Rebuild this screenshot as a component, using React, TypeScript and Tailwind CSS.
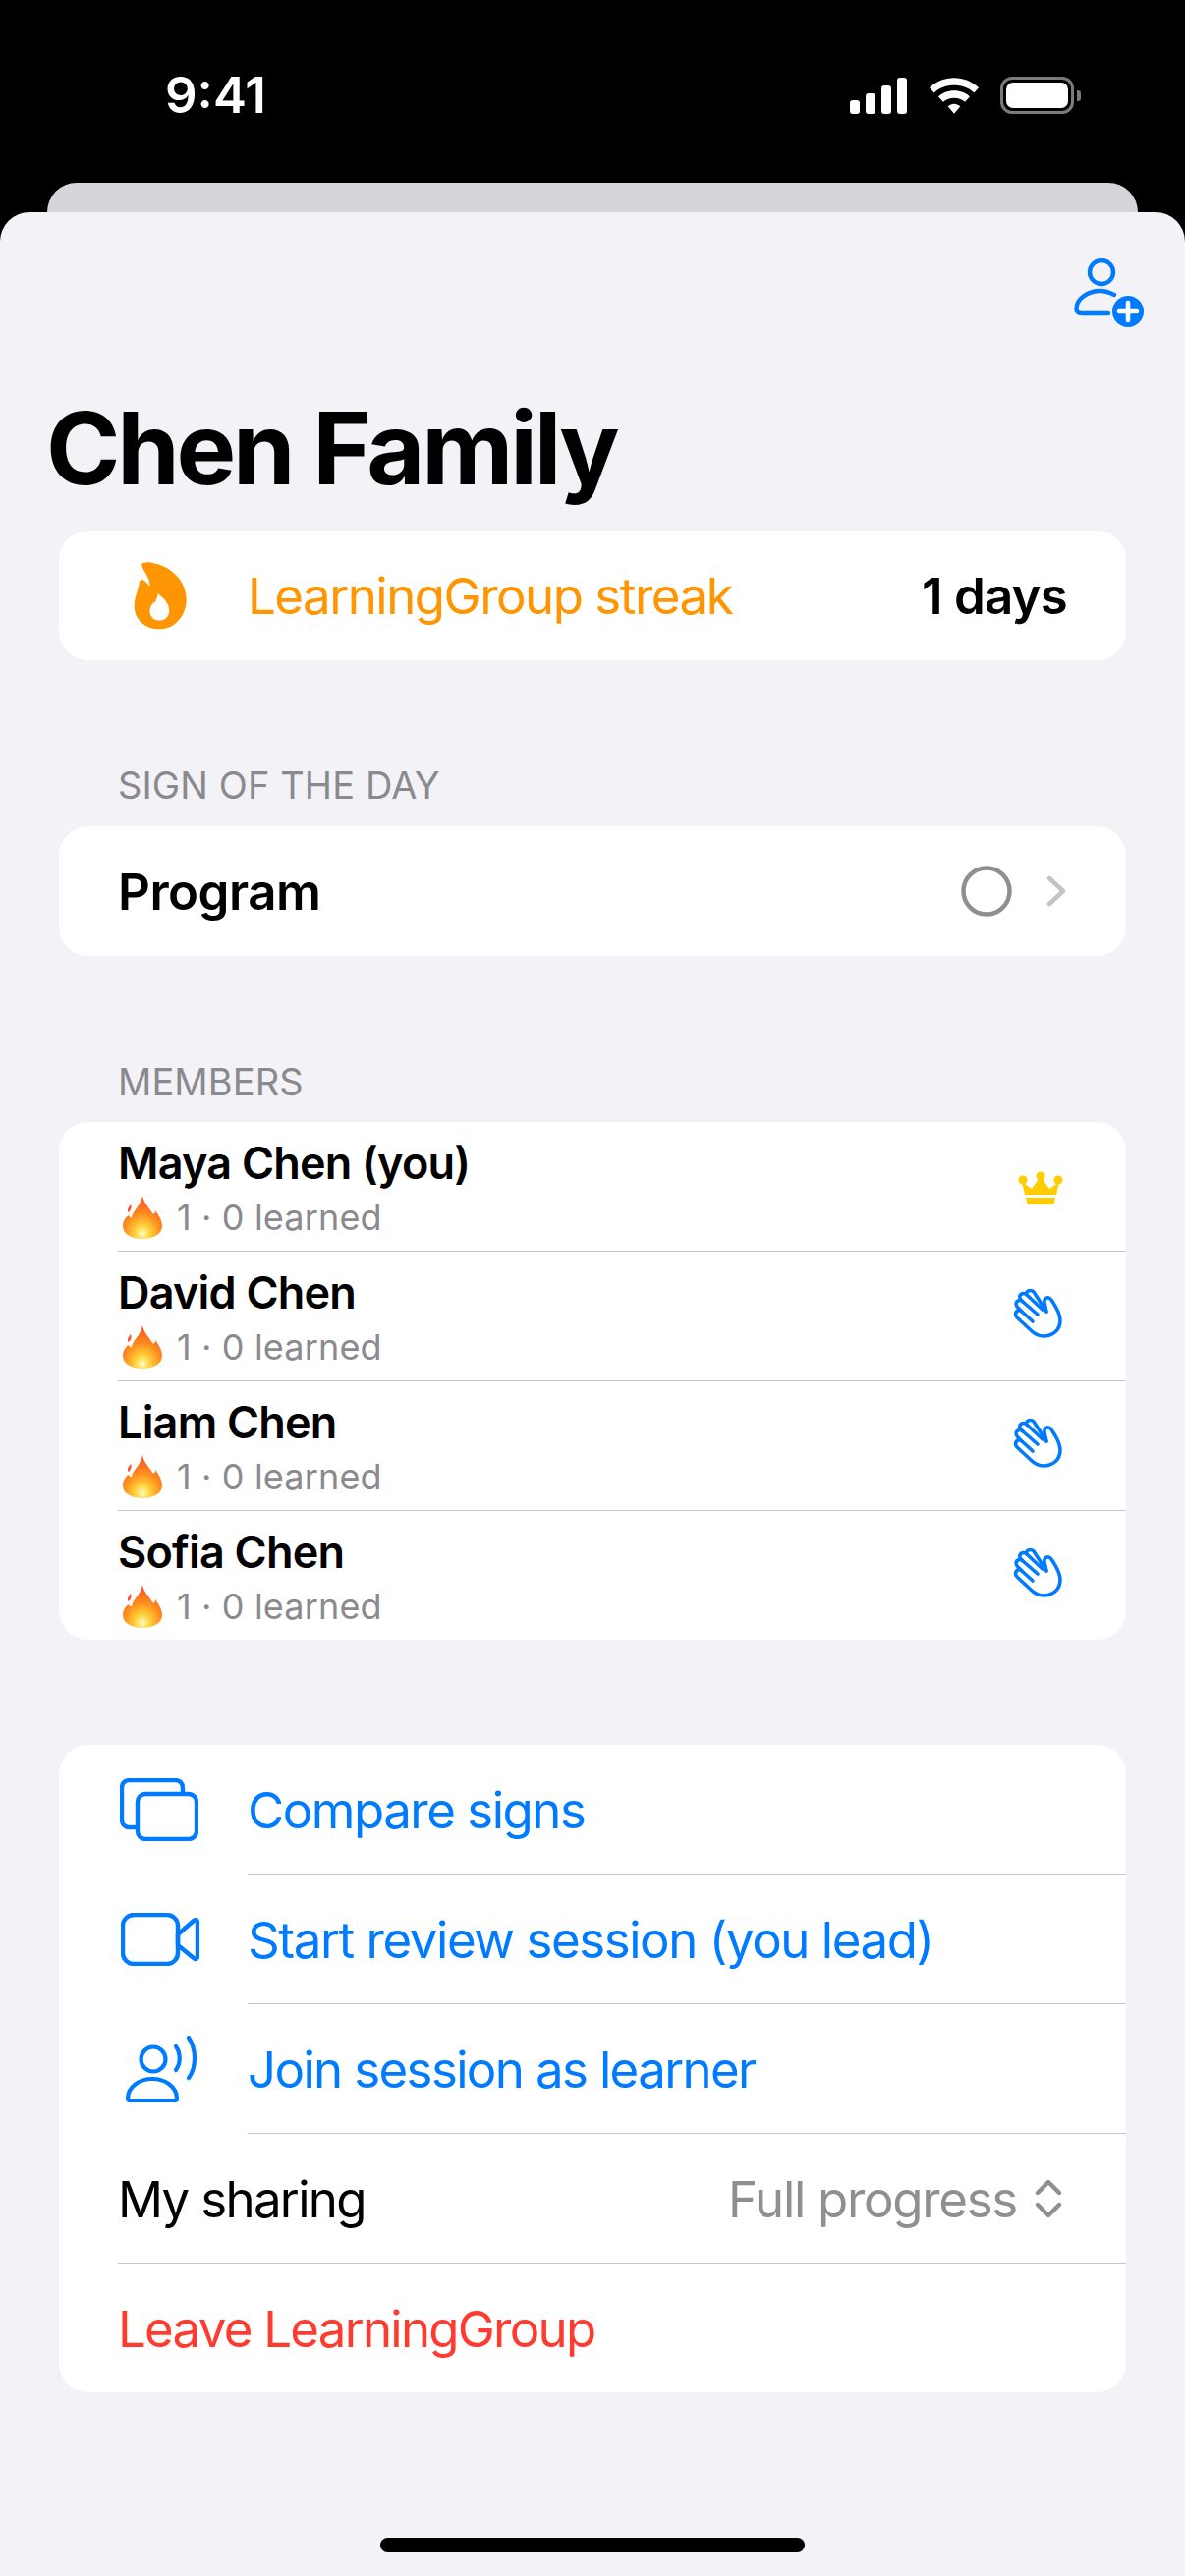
const font = "font-['Inter','Liberation_Sans',sans-serif]";

function Flame() {
  return (
    <svg viewBox="100 90 170 215" className="w-[57px] h-[72px]">
      <path fillRule="evenodd" fill="#ff9500" d="M130 104C132 97 145 96 160 98C215 106 266 150 266 210C266 262 228 300 185 300C140 300 108 270 108 230C108 200 120 185 123 158C124 148 133 148 140 154C146 160 150 165 155 170C158 145 135 125 130 104ZM180 192C177 205 172 222 166 220C160 225 155 235 155 245C155 262 168 274 184 274C202 274 214 262 214 243C214 220 196 205 180 192Z" />
    </svg>
  );
}

function Emoji() {
  return (
    <svg viewBox="0 0 40 44" className="w-[40px] h-[44px]">
      <defs>
        <radialGradient id="fl" cx="0.5" cy="0.88" r="0.95">
          <stop offset="0" stopColor="#fffbc0" />
          <stop offset="0.2" stopColor="#ffd23a" />
          <stop offset="0.5" stopColor="#ff8a1e" />
          <stop offset="1" stopColor="#f2402a" />
        </radialGradient>
      </defs>
      <path fill="#f8553a" d="M8 9C9 11 9 14 6 17C4 16 5 12 8 9Z" />
      <path fill="url(#fl)" d="M20 0C21 7 26 11 29 16C30 18 31 19 32 18C33 18 33 16 33 15C37 20 40 26 40 31C40 39 31 44 20 44C9 44 0 39 0 31C0 25 4 21 6 20C7 21 7 23 9 22C10 15 18 11 20 0Z" />
    </svg>
  );
}

function Wave() {
  return (
    <svg viewBox="0 0 70 70" className="w-[70px] h-[70px] shrink-0" fill="none" stroke="#007aff" strokeWidth="3.6" strokeLinecap="round" strokeLinejoin="round">
      <path d="M45 30L43 21C42 16 47 14 50 18C54 24 59 31 59 39C59 50 50 55 42 55C37 55 33 53 29 49L15 36C11 32 16 26 20 30L31 40" />
      <path d="M20 30L16 26C11 21 17 16 21 20L36 33" />
      <path d="M21 20L19 18C15 14 21 9 25 13L41 28" />
      <path d="M25 13C23 9 29 7 32 10L45 30" />
    </svg>
  );
}

function Crown() {
  return (
    <svg viewBox="0 0 46 34" className="w-[46px] h-[34px] ml-[16px] mt-[2px]" fill="#ffcc00">
      <circle cx="5" cy="9" r="4.5" />
      <circle cx="23" cy="5" r="4.5" />
      <circle cx="41" cy="9" r="4.5" />
      <path d="M4 11L14 18L23 5L32 18L42 11L39 24H7Z" />
      <path d="M8 27H38L37 32C36.7 33.4 35.5 34 34 34H12C10.5 34 9.3 33.4 9 32Z" />
    </svg>
  );
}

function Member({ name, crown }: { name: string; crown?: boolean }) {
  return (
    <div className="h-[131px] flex items-center pl-[60px] pr-[56px]">
      <div className="flex-1 h-full flex flex-col pt-[13px]">
        <div className="text-[45px] leading-[58px] font-semibold text-black tracking-[-0.8px]">{name}</div>
        <div className="flex items-center h-[48px] mt-[2px] pl-[5px]">
          <Emoji />
          <span className="ml-[15px] text-[36px] text-[#8a8a8e] tracking-[0.15px]">1 · 0 learned</span>
        </div>
      </div>
      <div className="w-[70px] flex">{crown ? <Crown /> : <Wave />}</div>
    </div>
  );
}

function Divider({ inset }: { inset: string }) {
  return <div className={`h-px bg-[#c6c6c8] ${inset}`} />;
}

function ActionRow({ icon, label, tracking }: { icon: React.ReactNode; label: string; tracking: string }) {
  return (
    <div className="h-[131px] flex items-center">
      <div className="w-[192px] flex justify-center pl-[14px]">{icon}</div>
      <span className={`text-[51px] text-[#007aff] pt-[3px] ${tracking}`}>{label}</span>
    </div>
  );
}

function Label({ children }: { children: React.ReactNode }) {
  return <div className="pl-[120px] text-[38px] leading-[46px] text-[#8a8a8e] tracking-[0.1px]">{children}</div>;
}

export default function App() {
  return (
    <div className={`${font} w-[1206px] h-[2622px] bg-black flex flex-col overflow-hidden`}>
      <div className="h-[186px] flex justify-between text-white">
        <span className="ml-[168px] mt-[66px] text-[51px] leading-[62px] font-semibold">9:41</span>
        <div className="mr-[106px] mt-[78px] flex items-start h-[40px]">
          <svg viewBox="0 0 58 38" className="w-[58px] h-[38px] mt-[1px]" fill="#fff">
            <rect x="0" y="23" width="10" height="14" rx="3" />
            <rect x="16" y="16" width="10" height="21" rx="3" />
            <rect x="32" y="8" width="10" height="29" rx="3" />
            <rect x="48" y="0" width="10" height="37" rx="3" />
          </svg>
          <svg viewBox="0 0 150 110" className="w-[50px] h-[37px] ml-[23px] mt-[1px]" fill="#fff">
            <path d="M0 30C40 -10 110 -10 150 30L136 46C105 15 45 15 14 46Z" />
            <path d="M27 58C50 33 100 33 123 58L108 74C90 58 60 58 42 74Z" />
            <path d="M56 87C68 77 82 77 94 87L75 110Z" />
          </svg>
          <div className="ml-[22px] w-[82px] h-[38px] flex items-center">
            <div className="w-[75px] h-[38px] rounded-[12px] border-[3px] border-[#7b7b7b] p-[3px]">
              <div className="w-full h-full bg-white rounded-[7px]" />
            </div>
            <div className="ml-[3px] w-[4px] h-[11px] rounded-r-[3px] bg-[#7b7b7b]" />
          </div>
        </div>
      </div>
      <div className="h-[30px] mx-[48px] bg-[#d5d5da] rounded-t-[30px]" />
      <div className="flex-1 bg-[#f2f2f7] rounded-t-[30px] flex flex-col">
        <div className="h-[116px] flex justify-end pr-[41px] pt-[47px]">
          <svg viewBox="0 0 72 70" className="w-[72px] h-[70px]" fill="none" stroke="#007aff" strokeWidth="4.4" strokeLinecap="round">
            <circle cx="28" cy="14" r="12" />
            <path d="M41 37C37 35 32 33 27 33C13 33 3 42 2.5 50C2 54 4 56 8 56H35" />
            <circle cx="55" cy="54" r="16" fill="#007aff" stroke="none" />
            <path d="M55 45V63M46 54H64" stroke="#fff" strokeWidth="4.6" />
          </svg>
        </div>
        <h1 className="pl-[47px] text-[102px] leading-[124px] font-bold text-black tracking-[-3.2px] mt-[62px] mb-[-1px]">Chen Family</h1>
        <div className="mx-[60px] mt-[23px] h-[132px] bg-white rounded-[30px] flex items-center">
          <div className="w-[192px] flex justify-center pl-[12px]"><Flame /></div>
          <span className="flex-1 text-[51px] text-[#ff9500] tracking-[-1.5px] pt-[3px]">LearningGroup streak</span>
          <span className="pr-[60px] text-[51px] font-semibold text-black tracking-[-0.8px] pt-[3px]">1 days</span>
        </div>
        <div className="mt-[104px]"><Label>SIGN OF THE DAY</Label></div>
        <div className="mx-[60px] mt-[19px] h-[132px] bg-white rounded-[30px] flex items-center pl-[60px] pr-[59px]">
          <span className="flex-1 text-[51px] font-semibold text-black tracking-[-0.5px] pt-[3px]">Program</span>
          <svg viewBox="0 0 52 52" className="w-[52px] h-[52px] mr-[35px]" fill="none" stroke="#8e8e93" strokeWidth="4.5"><circle cx="26" cy="26" r="23.5" /></svg>
          <svg viewBox="0 0 22 32" className="w-[22px] h-[32px]" fill="none" stroke="#c4c4c7" strokeWidth="4.6" strokeLinecap="round" strokeLinejoin="round"><path d="M3 3L17 16L3 29" /></svg>
        </div>
        <div className="mt-[105px]"><Label>MEMBERS</Label></div>
        <div className="mx-[60px] mt-[18px] bg-white rounded-[30px] overflow-hidden flex flex-col">
          <Member name="Maya Chen (you)" crown />
          <Divider inset="ml-[60px]" />
          <Member name="David Chen" />
          <Divider inset="ml-[60px]" />
          <Member name="Liam Chen" />
          <Divider inset="ml-[60px]" />
          <Member name="Sofia Chen" />
        </div>
        <div className="mx-[60px] mt-[107px] bg-white rounded-[30px] overflow-hidden flex flex-col">
          <ActionRow label="Compare signs" tracking="tracking-[-1.5px]" icon={
            <svg viewBox="0 0 80 64" className="w-[80px] h-[64px] mr-[3px]" fill="none" stroke="#007aff" strokeWidth="4.4">
              <path d="M64 14V10C64 5 61 2 56 2H10C5 2 2 5 2 10V42C2 47 5 50 10 50H18" />
              <rect x="18" y="16" width="60" height="46" rx="8" />
            </svg>} />
          <Divider inset="ml-[192px]" />
          <ActionRow label="Start review session (you lead)" tracking="tracking-[-1.45px]" icon={
            <svg viewBox="0 0 80 54" className="w-[80px] h-[54px]" fill="none" stroke="#007aff" strokeWidth="4.4" strokeLinejoin="round">
              <rect x="2" y="2" width="56" height="50" rx="11" />
              <path d="M58 22L74 8C76 6 78 7 78 10V44C78 47 76 48 74 46L58 33Z" />
            </svg>} />
          <Divider inset="ml-[192px]" />
          <ActionRow label="Join session as learner" tracking="tracking-[-1.65px]" icon={
            <svg viewBox="0 0 76 68" className="w-[76px] h-[68px] ml-[2px]" fill="none" stroke="#007aff" strokeWidth="4.2" strokeLinecap="round">
              <circle cx="30" cy="24" r="12.5" />
              <path d="M4 64C4 52 16 44 29 44C42 44 54 52 54 64C54 66 53 66 52 66H6C5 66 4 66 4 64Z" />
              <path d="M53 11C58 18 58 28 53 35" />
              <path d="M66 2C74 14 74 32 66 43" />
            </svg>} />
          <Divider inset="ml-[192px]" />
          <div className="h-[131px] flex items-center pl-[60px] pr-[65px]">
            <span className="flex-1 text-[51px] text-black tracking-[-1.7px] pt-[3px]">My sharing</span>
            <span className="text-[51px] text-[#8e8e93] mr-[18px] tracking-[-1.3px] pt-[3px]">Full progress</span>
            <svg viewBox="0 0 28 40" className="w-[28px] h-[40px]" fill="none" stroke="#8e8e93" strokeWidth="4.4" strokeLinecap="round" strokeLinejoin="round">
              <path d="M3 14L14 3L25 14" />
              <path d="M3 26L14 37L25 26" />
            </svg>
          </div>
          <Divider inset="ml-[60px]" />
          <div className="h-[131px] flex items-center pl-[60px]">
            <span className="text-[51px] text-[#ff3b30] tracking-[-1.75px] pt-[3px]">Leave LearningGroup</span>
          </div>
        </div>
        <div className="mt-auto mb-[24px] mx-auto w-[432px] h-[15px] rounded-full bg-black" />
      </div>
    </div>
  );
}
